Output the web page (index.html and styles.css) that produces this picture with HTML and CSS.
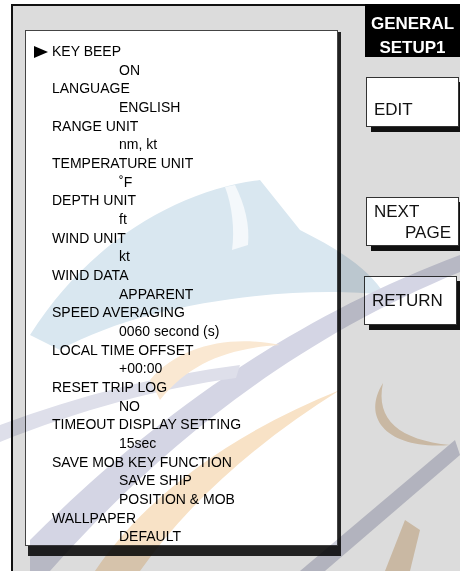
FILE: index.html
```html
<!DOCTYPE html>
<html lang="en">
<head>
  <meta charset="UTF-8" />
  <meta name="viewport" content="width=device-width, initial-scale=1.0"/>
  <title>General Setup 1</title>
  <link rel="stylesheet" href="styles.css">
</head>
<body>
  <div class="screen">
    <div class="menu">
      <div class="item selected">
        <svg class="cursor" width="14" height="12" viewBox="0 0 14 12"><polygon points="0,0 14,6 0,12" fill="#000"/></svg>
        <div class="label">KEY BEEP</div>
        <div class="value">ON</div>
      </div>
      <div class="item"><div class="label">LANGUAGE</div><div class="value">ENGLISH</div></div>
      <div class="item"><div class="label">RANGE UNIT</div><div class="value">nm, kt</div></div>
      <div class="item"><div class="label">TEMPERATURE UNIT</div><div class="value">˚F</div></div>
      <div class="item"><div class="label">DEPTH UNIT</div><div class="value">ft</div></div>
      <div class="item"><div class="label">WIND UNIT</div><div class="value">kt</div></div>
      <div class="item"><div class="label">WIND DATA</div><div class="value">APPARENT</div></div>
      <div class="item"><div class="label">SPEED AVERAGING</div><div class="value">0060 second (s)</div></div>
      <div class="item"><div class="label">LOCAL TIME OFFSET</div><div class="value">+00:00</div></div>
      <div class="item"><div class="label">RESET TRIP LOG</div><div class="value">NO</div></div>
      <div class="item"><div class="label">TIMEOUT DISPLAY SETTING</div><div class="value">15sec</div></div>
      <div class="item"><div class="label">SAVE MOB KEY FUNCTION</div><div class="value">SAVE SHIP</div><div class="value">POSITION &amp; MOB</div></div>
      <div class="item"><div class="label">WALLPAPER</div><div class="value">DEFAULT</div></div>
    </div>

    <div class="softkeys">
      <div class="title">GENERAL<br>SETUP1</div>
      <div class="key key-edit">EDIT</div>
      <div class="key key-next"><span>NEXT</span><span class="right">PAGE</span></div>
      <div class="key key-return">RETURN</div>
    </div>
  </div>

  <!-- faint watermark printed over the page -->
  <svg class="watermark" width="460" height="571" viewBox="0 0 460 571">
    <path d="M30 335 C 90 240, 180 190, 260 180 L 300 230 C 340 250, 370 270, 385 295 C 300 285, 150 300, 60 350 Z" fill="#d9e7f0"/>
    <path d="M235 185 C 245 205, 250 225, 248 245 L 232 250 C 235 230, 232 205, 225 187 Z" fill="#ffffff" opacity="0.7"/>
    <path d="M30 540 C 120 450, 260 330, 460 255 L 460 272 C 270 350, 140 470, 50 571 L 30 571 Z" fill="#d4d5e4"/>
    <path d="M0 425 C 80 395, 160 375, 240 365 L 236 378 C 160 388, 80 410, 0 442 Z" fill="#dedfea"/>
    <path d="M95 571 C 150 490, 240 430, 340 390 C 260 440, 190 500, 140 571 Z" fill="#f8e2c6"/>
    <path d="M383 383 C 360 420, 390 450, 450 445 C 400 440, 375 420, 383 383 Z" fill="#e9d6bd"/>
    <path d="M150 380 C 180 345, 230 335, 280 345 C 230 348, 190 362, 160 400 Z" fill="#fae8d2"/>
    <path d="M385 571 L 405 520 L 420 530 L 410 571 Z" fill="#e9d6bd"/>
    <path d="M300 571 L 455 440 L 460 455 L 325 571 Z" fill="#cfd0dc"/>
  </svg>
</body>
</html>
```

FILE: styles.css
```css
body {
  margin: 0;
  background: #fff;
  font-family: "Liberation Sans", Arial, sans-serif;
  color: #000;
  width: 460px;
  height: 571px;
  overflow: hidden;
  position: relative;
}
.screen {
  margin: 4px 0 0 11px;
  height: 567px;
  border-left: 2px solid #111;
  border-top: 2px solid #111;
  background: #dcdcdc;
  display: flex;
  align-items: flex-start;
}
.menu {
  margin: 24px 0 0 12px;
  width: 311px;
  height: 503px;
  padding: 11px 0 0 0;
  background: #fff;
  border: 1px solid #444;
  box-shadow: 3px 2px 0 #222, 3px 10px 0 #222;
  font-size: 14px;
  line-height: 18.67px;
}
.item {
  display: grid;
  grid-template-columns: 18px 1fr;
  padding-left: 8px;
  align-items: center;
}
.label, .value {
  grid-column: 2;
  white-space: nowrap;
}
.value {
  padding-left: 67px;
}
.cursor {
  grid-column: 1;
  grid-row: 1;
  margin-top: 1px;
}
.softkeys {
  margin-left: 27px;
  display: flex;
  flex-direction: column;
  width: 95px;
}
.title {
  background: #000;
  color: #fff;
  font-weight: bold;
  font-size: 17px;
  line-height: 24px;
  text-align: center;
  height: 53px;
  box-sizing: border-box;
  margin-top: -2px;
  padding-top: 8px;
}
.key {
  width: 93px;
  height: 50px;
  box-sizing: border-box;
  background: #fff;
  border: 1px solid #333;
  box-shadow: 5px 5px 0 #111;
  font-size: 17px;
  color: #111;
  padding: 0 7px;
  display: flex;
  flex-direction: column;
  justify-content: center;
  margin-left: 1px;
}
.key-edit {
  margin-top: 20px;
  padding-top: 16px;
}
.key-next {
  margin-top: 70px;
  height: 49px;
  line-height: 21px;
}
.key-next .right {
  text-align: right;
}
.key-return {
  margin-top: 30px;
  height: 49px;
  margin-left: -1px;
}
.watermark {
  position: absolute;
  left: 0;
  top: 0;
  pointer-events: none;
  mix-blend-mode: multiply;
}
```
